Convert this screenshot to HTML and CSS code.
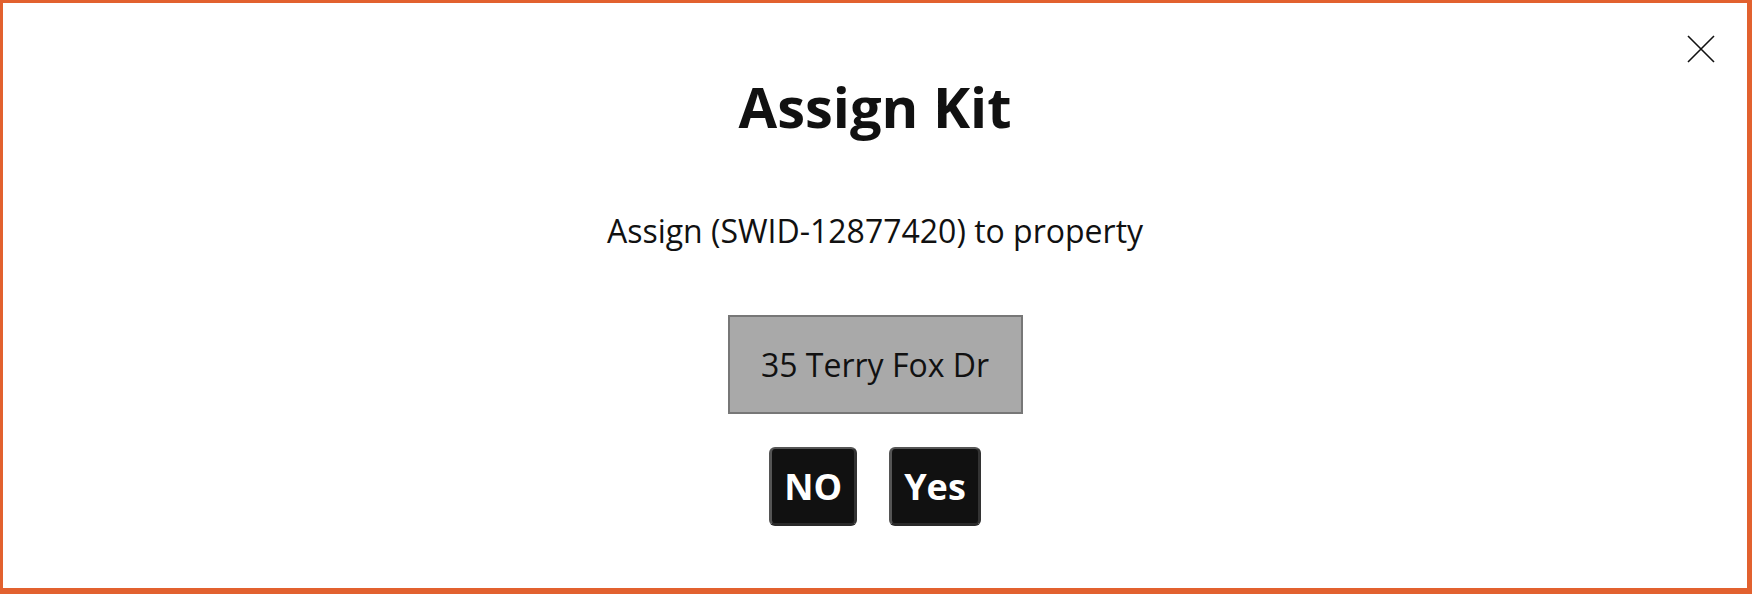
FILE: index.html
```html
<!DOCTYPE html>
<html>
<head lang="en">
    <meta charset="UTF-8">
    <title>Assign Kit</title>
    <link rel="stylesheet" href="styles.css">
</head>
<body>
<div class="dialog">
    <a class="close" href="javascript:;" title="Close">
        <svg width="28" height="28" viewBox="0 0 28 28">
            <path d="M1 1 L27 27 M27 1 L1 27" stroke="#111" stroke-width="1.6" fill="none"/>
        </svg>
    </a>
    <h1>Assign Kit</h1>
    <p class="msg">Assign (SWID-12877420) to property</p>
    <div class="property">35 Terry Fox Dr</div>
    <div class="actions">
        <a class="btn" href="javascript:;">NO</a>
        <a class="btn" href="javascript:;">Yes</a>
    </div>
</div>
</body>
</html>
```

FILE: styles.css
```css
body, h1, p {
    margin: 0;
    padding: 0;
}
body {
    background: #fff;
    font-family: "Open Sans", "Noto Sans", sans-serif;
    color: #111;
}
.dialog {
    position: relative;
    box-sizing: border-box;
    height: 594px;
    border: solid #e2612f;
    border-width: 3px 5px 6px 3px;
    display: flex;
    flex-direction: column;
    align-items: center;
    padding-top: 69px;
}
.close {
    position: absolute;
    top: 32px;
    right: 32px;
    width: 28px;
    height: 28px;
}
.close svg {
    display: block;
}
h1 {
    font-size: 56px;
    line-height: 68px;
    font-weight: 700;
}
.msg {
    margin-top: 71px;
    font-size: 32px;
    line-height: 40px;
}
.property {
    margin-top: 64px;
    box-sizing: border-box;
    width: 295px;
    height: 99px;
    border: 2px solid #777;
    background: #a9a9a9;
    display: flex;
    align-items: center;
    justify-content: center;
    font-size: 32px;
}
.actions {
    margin-top: 33px;
    display: flex;
    gap: 32px;
}
.btn {
    box-sizing: border-box;
    height: 79px;
    padding: 0 12px;
    display: flex;
    align-items: center;
    background: #111;
    border: 3px solid #555;
    border-right-color: #333;
    border-bottom-color: #2a2a2a;
    border-top-width: 2px;
    border-radius: 6px;
    color: #fff;
    font-size: 36px;
    font-weight: 700;
    text-decoration: none;
}
```
